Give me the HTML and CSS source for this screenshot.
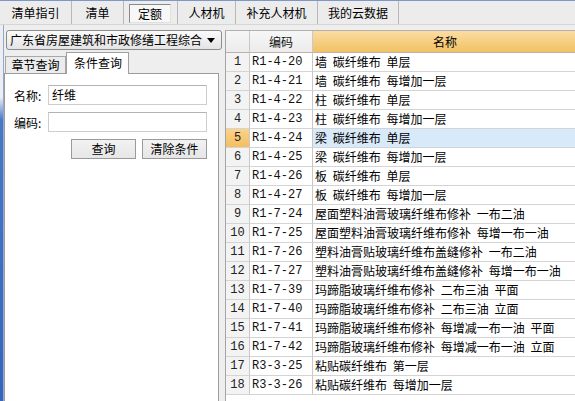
FILE: index.html
```html
<!DOCTYPE html>
<html lang="zh-CN">
<head>
<meta charset="utf-8">
<link rel="stylesheet" href="styles.css">
</head>
<body>
<div class="app">
  <div class="tabbar">
    <div class="tab t1">清单指引</div>
    <div class="tab t2">清单</div>
    <div class="tab active">定额</div>
    <div class="tab t4">人材机</div>
    <div class="tab t5">补充人材机</div>
    <div class="tab t6">我的云数据</div>
  </div>
  <div class="main">
    <div class="strip"></div>
    <div class="left">
      <div class="dropdown">
        <span class="dd-text">广东省房屋建筑和市政修缮工程综合</span>
        <span class="dd-arrow"></span>
      </div>
      <div class="subtabs">
        <div class="subtab">章节查询</div>
        <div class="subtab sub-active">条件查询</div>
      </div>
      <div class="panel">
        <div class="field">
          <span class="label">名称:</span>
          <div class="input">纤维</div>
        </div>
        <div class="field">
          <span class="label">编码:</span>
          <div class="input"></div>
        </div>
        <div class="buttons">
          <div class="btn">查询</div>
          <div class="btn">清除条件</div>
        </div>
      </div>
    </div>
    <div class="grid">
      <div class="row head">
        <div class="c num"></div>
        <div class="c code hc">编码</div>
        <div class="c name hn">名称</div>
      </div>
      <div class="row"><div class="c num">1</div><div class="c code">R1-4-20</div><div class="c name">墙 碳纤维布 单层</div></div>
      <div class="row"><div class="c num">2</div><div class="c code">R1-4-21</div><div class="c name">墙 碳纤维布 每增加一层</div></div>
      <div class="row"><div class="c num">3</div><div class="c code">R1-4-22</div><div class="c name">柱 碳纤维布 单层</div></div>
      <div class="row"><div class="c num">4</div><div class="c code">R1-4-23</div><div class="c name">柱 碳纤维布 每增加一层</div></div>
      <div class="row sel"><div class="c num">5</div><div class="c code">R1-4-24</div><div class="c name">梁 碳纤维布 单层</div></div>
      <div class="row"><div class="c num">6</div><div class="c code">R1-4-25</div><div class="c name">梁 碳纤维布 每增加一层</div></div>
      <div class="row"><div class="c num">7</div><div class="c code">R1-4-26</div><div class="c name">板 碳纤维布 单层</div></div>
      <div class="row"><div class="c num">8</div><div class="c code">R1-4-27</div><div class="c name">板 碳纤维布 每增加一层</div></div>
      <div class="row"><div class="c num">9</div><div class="c code">R1-7-24</div><div class="c name">屋面塑料油膏玻璃纤维布修补 一布二油</div></div>
      <div class="row"><div class="c num">10</div><div class="c code">R1-7-25</div><div class="c name">屋面塑料油膏玻璃纤维布修补 每增一布一油</div></div>
      <div class="row"><div class="c num">11</div><div class="c code">R1-7-26</div><div class="c name">塑料油膏贴玻璃纤维布盖缝修补 一布二油</div></div>
      <div class="row"><div class="c num">12</div><div class="c code">R1-7-27</div><div class="c name">塑料油膏贴玻璃纤维布盖缝修补 每增一布一油</div></div>
      <div class="row"><div class="c num">13</div><div class="c code">R1-7-39</div><div class="c name">玛蹄脂玻璃纤维布修补 二布三油 平面</div></div>
      <div class="row"><div class="c num">14</div><div class="c code">R1-7-40</div><div class="c name">玛蹄脂玻璃纤维布修补 二布三油 立面</div></div>
      <div class="row"><div class="c num">15</div><div class="c code">R1-7-41</div><div class="c name">玛蹄脂玻璃纤维布修补 每增减一布一油 平面</div></div>
      <div class="row"><div class="c num">16</div><div class="c code">R1-7-42</div><div class="c name">玛蹄脂玻璃纤维布修补 每增减一布一油 立面</div></div>
      <div class="row"><div class="c num">17</div><div class="c code">R3-3-25</div><div class="c name">粘贴碳纤维布 第一层</div></div>
      <div class="row"><div class="c num">18</div><div class="c code">R3-3-26</div><div class="c name">粘贴碳纤维布 每增加一层</div></div>
    </div>
  </div>
</div>
</body>
</html>
```

FILE: styles.css
```css
* { box-sizing: border-box; }
html, body { margin: 0; padding: 0; }
body {
  width: 575px;
  height: 401px;
  overflow: hidden;
  background: #eeeeee;
  font-family: "Noto Sans CJK SC", "Liberation Sans", sans-serif;
  font-size: 12px;
  color: #000;
}
.app { display: flex; flex-direction: column; height: 401px; }

.tabbar {
  display: flex;
  height: 25px;
  border-top: 1px solid #7d97c6;
  border-bottom: 1px solid #d6d6d6;
  background: #ececec;
}
.tab {
  height: 23px;
  line-height: 23px;
  text-align: center;
  border-right: 1px solid #b8b8b8;
  font-size: 12px;
}
.t1 { width: 72px; }
.t2 { width: 52px; }
.active {
  width: 42px;
  height: 19px;
  line-height: 18px;
  margin: 3px 6px 0 5px;
  border: 1px solid #8a8a8a;
  border-right-color: #e0e0e0;
  border-bottom-color: #e0e0e0;
  background: #f7f7f7;
}
.t4 { width: 59px; border-left: 1px solid #b8b8b8; }
.t5 { width: 82px; }
.t6 { width: 81px; }

.main { display: flex; flex: 1; min-height: 0; }
.strip {
  width: 4px;
  background: linear-gradient(to bottom, #eeeeee 0, #eeeeee 72px, #4a78c4 95px, #3466ba 100%);
  border-right: 1px solid #8fa8d6;
}
.left {
  width: 218px;
  display: flex;
  flex-direction: column;
  padding-top: 5px;
}
.dropdown {
  margin-left: 2px;
  width: 216px;
  height: 20px;
  border: 1px solid #8c8c8c;
  border-radius: 3px;
  background: linear-gradient(to bottom, #fafafa, #e4e4e4);
  display: flex;
  align-items: center;
  padding-left: 3px;
  font-size: 12px;
  line-height: 18px;
}
.dd-text { flex: 1; white-space: nowrap; }
.dd-arrow {
  width: 0; height: 0;
  border-left: 4px solid transparent;
  border-right: 4px solid transparent;
  border-top: 5px solid #000;
  margin-right: 6px;
}
.subtabs {
  display: flex;
  align-items: flex-end;
  height: 22px;
  margin-top: 1px;
  padding-left: 1px;
}
.subtab {
  width: 61px;
  height: 17px;
  line-height: 15px;
  border: 1px solid #a8a8a8;
  border-bottom: none;
  background: #ececec;
  text-align: center;
  font-size: 12px;
}
.sub-active {
  width: 63px;
  height: 22px;
  line-height: 19px;
  background: #fff;
  border-color: #a0a0a0;
  position: relative;
  margin-bottom: -1px;
  z-index: 1;
  padding-left: 1px;
}
.panel {
  flex: 1;
  width: 215px;
  border: 1px solid #9c9c9c;
  border-bottom: none;
  background: #fff;
  padding: 11px 11px 0 9px;
  display: flex;
  flex-direction: column;
  gap: 7px;
}
.field { display: flex; align-items: center; height: 20px; }
.label { width: 34px; font-size: 12px; }
.input {
  flex: 1;
  height: 20px;
  border: 1px solid #cdcdcd;
  border-top-color: #b4b4b4;
  line-height: 18px;
  padding-left: 3px;
  font-size: 12px;
}
.buttons { display: flex; justify-content: flex-end; gap: 6px; }
.btn {
  width: 65px;
  height: 20px;
  line-height: 18px;
  border: 1px solid #9a9a9a;
  background: linear-gradient(to bottom, #f2f2f2, #e6e6e6);
  text-align: center;
  font-size: 12px;
}

.grid {
  flex: 1;
  margin-left: 3px;
  margin-top: 5px;
  background: #fff;
  border-left: 1px solid #a4a4a4;
  border-top: 1px solid #b0b0b0;
  display: flex;
  flex-direction: column;
}
.row {
  display: grid;
  grid-template-columns: 24px 63px 1fr;
  height: 19px;
}
.c {
  border-bottom: 1px solid #d4d4d4;
  line-height: 18px;
  white-space: nowrap;
  overflow: hidden;
}
.num {
  border-right: 1px solid #c8c8c8;
  background: #f3f3f3;
  text-align: center;
  font-family: "Liberation Mono", monospace;
  font-size: 12px;
  color: #222;
}
.code {
  border-right: 1px solid #c8c8c8;
  padding-left: 2px;
  font-family: "Liberation Mono", monospace;
  font-size: 12px;
  color: #111;
}
.name { padding-left: 2px; word-spacing: 3px; }
.head { height: 22px; }
.head .c { line-height: 21px; border-bottom-color: #c0b0a8; }
.head .num, .head .hc { background: linear-gradient(to bottom, #f6f6f6, #ececec); }
.hc { text-align: center; font-family: "Noto Sans CJK SC", sans-serif; padding-left: 0; }
.hn {
  text-align: center;
  background: linear-gradient(to bottom, #fbdca2, #f1c264);
}
.sel .num { background: linear-gradient(to bottom, #fbd38a, #f4be60); }
.sel .name { background: #d8e9f9; }
```
